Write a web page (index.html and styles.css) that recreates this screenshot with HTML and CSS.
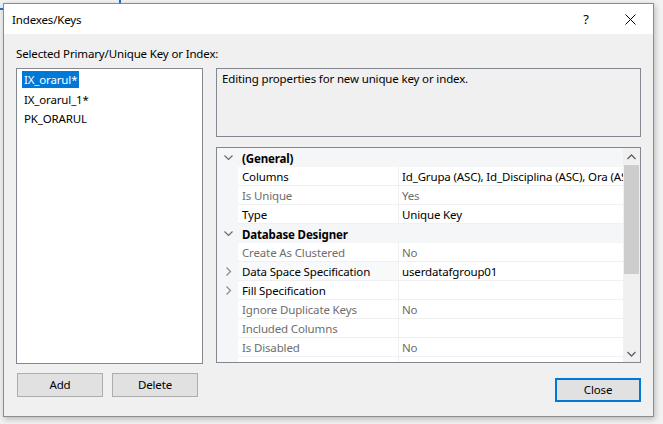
FILE: index.html
```html
<!DOCTYPE html>
<html>
<head>
<meta charset="utf-8">
<link rel="stylesheet" href="styles.css">
</head>
<body>
<div class="window">
  <div class="titlebar">
    <span class="title">Indexes/Keys</span>
    <span class="help">?</span>
    <span class="xbtn"><svg width="11" height="11" viewBox="0 0 11 11"><path d="M0.5 0.5 L10.5 10.5 M10.5 0.5 L0.5 10.5" stroke="#000" stroke-width="1" fill="none"/></svg></span>
  </div>
  <div class="content">
    <div class="label">Selected Primary/Unique Key or Index:</div>
    <div class="main">
      <div class="left">
        <div class="listbox">
          <div class="item"><span class="sel">IX_orarul*</span></div>
          <div class="item"><span class="txt">IX_orarul_1*</span></div>
          <div class="item"><span class="txt">PK_ORARUL</span></div>
        </div>
        <div class="btnrow">
          <button class="btn">Add</button>
          <button class="btn">Delete</button>
        </div>
      </div>
      <div class="right">
        <div class="desc">Editing properties for new unique key or index.</div>
        <div class="pgrid">
          <div class="rows">
            <div class="row cat">
              <span class="gut"><svg width="9" height="6" viewBox="0 0 9 6"><path d="M0.5 0.5 L4.5 4.5 L8.5 0.5" stroke="#6a6a6a" stroke-width="1.2" fill="none"/></svg></span>
              <span class="catname">(General)</span>
            </div>
            <div class="row"><span class="gut"></span><span class="name">Columns</span><span class="val">Id_Grupa (ASC), Id_Disciplina (ASC), Ora (ASC)</span></div>
            <div class="row ro"><span class="gut"></span><span class="name">Is Unique</span><span class="val">Yes</span></div>
            <div class="row"><span class="gut"></span><span class="name">Type</span><span class="val">Unique Key</span></div>
            <div class="row cat">
              <span class="gut"><svg width="9" height="6" viewBox="0 0 9 6"><path d="M0.5 0.5 L4.5 4.5 L8.5 0.5" stroke="#6a6a6a" stroke-width="1.2" fill="none"/></svg></span>
              <span class="catname">Database Designer</span>
            </div>
            <div class="row ro"><span class="gut"></span><span class="name">Create As Clustered</span><span class="val">No</span></div>
            <div class="row sel-row"><span class="gut"><svg width="6" height="9" viewBox="0 0 6 9"><path d="M0.5 0.5 L4.5 4.5 L0.5 8.5" stroke="#8a8a8a" stroke-width="1.2" fill="none"/></svg></span><span class="name">Data Space Specification</span><span class="val">userdatafgroup01</span></div>
            <div class="row"><span class="gut"><svg width="6" height="9" viewBox="0 0 6 9"><path d="M0.5 0.5 L4.5 4.5 L0.5 8.5" stroke="#8a8a8a" stroke-width="1.2" fill="none"/></svg></span><span class="name">Fill Specification</span><span class="val"></span></div>
            <div class="row ro"><span class="gut"></span><span class="name">Ignore Duplicate Keys</span><span class="val">No</span></div>
            <div class="row ro"><span class="gut"></span><span class="name">Included Columns</span><span class="val"></span></div>
            <div class="row ro"><span class="gut"></span><span class="name">Is Disabled</span><span class="val">No</span></div>
            <div class="row ro"><span class="gut"></span><span class="name"></span><span class="val"></span></div>
          </div>
          <div class="vscroll">
            <span class="arrow"><svg width="9" height="6" viewBox="0 0 9 6"><path d="M0.5 5 L4.5 1 L8.5 5" stroke="#606060" stroke-width="1.3" fill="none"/></svg></span>
            <span class="thumb"></span>
            <span class="track"></span>
            <span class="arrow"><svg width="9" height="6" viewBox="0 0 9 6"><path d="M0.5 1 L4.5 5 L8.5 1" stroke="#606060" stroke-width="1.3" fill="none"/></svg></span>
          </div>
        </div>
        <div class="closerow">
          <button class="btn primary">Close</button>
        </div>
      </div>
    </div>
  </div>
</div>
</body>
</html>
```

FILE: styles.css
```css
html, body {
  margin: 0;
  padding: 0;
}
body {
  width: 663px;
  height: 424px;
  overflow: hidden;
  padding: 3px 0 0 3px;
  box-sizing: border-box;
  background-color: #f2f2f2;
  background-image:
    linear-gradient(#1a73c9, #1a73c9),
    linear-gradient(#1a73c9, #1a73c9);
  background-size: 2px 3px, 3px 2px;
  background-position: 119px 0, 0 8px;
  background-repeat: no-repeat;
  font-family: "Noto Sans", "Segoe UI", sans-serif;
  font-size: 11.5px;
  letter-spacing: -0.15px;
  color: #000;
}
.window {
  width: 651px;
  height: 414px;
  box-sizing: border-box;
  border: 1px solid #8c8c8c;
  background: #f0f0f0;
  box-shadow: 1px 2px 6px rgba(0, 0, 0, 0.25);
  display: flex;
  flex-direction: column;
}
.titlebar {
  height: 30px;
  background: #fff;
  display: flex;
  align-items: center;
  padding-left: 8px;
  flex-shrink: 0;
}
.title {
  flex: 1;
  line-height: 16px;
  padding-top: 1px;
}
.help {
  font-size: 13px;
  width: 12px;
  margin-right: 33px;
  text-align: center;
}
.xbtn {
  display: flex;
  margin-right: 17px;
  padding-top: 1px;
}
.content {
  padding: 12px 12px 0 12px;
}
.label {
  line-height: 16px;
  height: 16px;
}
.main {
  margin-top: 6px;
  display: flex;
  gap: 13px;
}
.left {
  width: 187px;
}
.listbox {
  height: 296px;
  box-sizing: border-box;
  border: 1px solid #828790;
  background: #fff;
  padding: 1px 0 0 5px;
}
.item {
  height: 19.5px;
  display: flex;
  align-items: center;
}
.sel {
  background: #0078d7;
  color: #fff;
  padding: 0 2px;
  line-height: 17px;
}
.txt {
  padding: 0 2px;
}
.btnrow {
  margin-top: 9px;
  padding-left: 1px;
  display: flex;
  gap: 9px;
}
.btn {
  font-family: inherit;
  font-size: 11.5px;
  letter-spacing: -0.15px;
  color: #000;
  width: 86px;
  height: 24px;
  box-sizing: border-box;
  background: #e1e1e1;
  border: 1px solid #adadad;
  padding: 0;
  margin: 0;
  line-height: 20px;
}
.btn.primary {
  border: 2px solid #0078d7;
}
.right {
  width: 425px;
}
.desc {
  height: 69px;
  box-sizing: border-box;
  border: 1px solid #828790;
  background: #f0f0f0;
  padding: 2px 5px;
  line-height: 16px;
}
.pgrid {
  margin-top: 10px;
  height: 216px;
  box-sizing: border-box;
  border: 1px solid #828790;
  background: #fff;
  display: flex;
  overflow: hidden;
}
.rows {
  width: 406px;
  overflow: hidden;
}
.row {
  display: grid;
  grid-template-columns: 21px 161px 224px;
  height: 19px;
}
.row > span {
  display: flex;
  align-items: center;
  height: 19px;
  box-sizing: border-box;
  white-space: nowrap;
  overflow: hidden;
}
.gut {
  background: #f5f6f8;
  justify-content: center;
  padding-left: 2px;
}
.name {
  padding-left: 4px;
  border-right: 1px solid #f0f0f0;
  border-bottom: 1px solid #f0f0f0;
  padding-top: 1px;
}
.val {
  padding-left: 3px;
  border-bottom: 1px solid #f0f0f0;
  padding-top: 1px;
}
.ro .name, .ro .val {
  color: #6d6d6d;
}
.sel-row .name {
  background: #f7f9fb;
}
.cat {
  background: #f5f6f8;
}
.cat .catname {
  grid-column: 2 / 4;
  padding-left: 4px;
  font-weight: bold;
  padding-top: 1px;
}
.vscroll {
  width: 17px;
  background: #f0f0f0;
  display: flex;
  flex-direction: column;
  align-items: center;
}
.arrow {
  height: 17px;
  display: flex;
  align-items: center;
  justify-content: center;
  flex-shrink: 0;
}
.thumb {
  width: 15px;
  height: 109px;
  background: #cdcdcd;
  flex-shrink: 0;
}
.track {
  flex: 1;
}
.closerow {
  margin-top: 15px;
  display: flex;
  justify-content: flex-end;
}
```
